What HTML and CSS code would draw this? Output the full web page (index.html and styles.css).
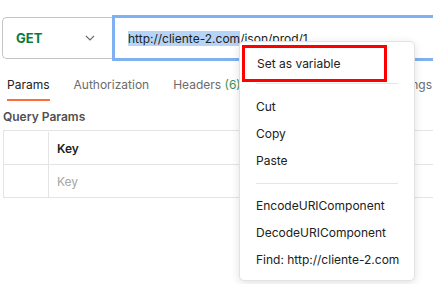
FILE: index.html
```html
<!DOCTYPE html>
<html lang="en">
  <head>
    <meta charset="UTF-8" />
    <title>Request</title>
    <link rel="stylesheet" href="styles.css">
  </head>
  <body>
    <div class="request_bar">
      <div class="method">
        <span class="get">GET</span>
        <svg class="chevron" width="10" height="6" viewBox="0 0 10 6"><path d="M1 1l4 4 4-4" fill="none" stroke="#6b6b6b" stroke-width="1.1"/></svg>
      </div>
      <div class="url"><span class="sel">http://cliente-2.com</span>/json/prod/1</div>
    </div>

    <div class="tabs">
      <div class="tab active">Params</div>
      <div class="tab">Authorization</div>
      <div class="tab">Headers <span class="count">(6)</span></div>
      <div class="tab">Body</div>
      <div class="tab last">Settings</div>
    </div>

    <div class="section_title">Query Params</div>
    <div class="params">
      <div class="row">
        <div class="check"></div>
        <div class="cell head">Key</div>
      </div>
      <div class="row">
        <div class="check"></div>
        <div class="cell placeholder">Key</div>
      </div>
    </div>

    <div class="menu">
      <div class="item highlighted">Set as variable</div>
      <div class="divider"></div>
      <div class="item">Cut</div>
      <div class="item">Copy</div>
      <div class="item">Paste</div>
      <div class="divider"></div>
      <div class="item">EncodeURIComponent</div>
      <div class="item">DecodeURIComponent</div>
      <div class="item">Find: http://cliente-2.com</div>
    </div>
  </body>
</html>
```

FILE: styles.css
```css
body {
  margin: 0;
  background-color: #ffffff;
  font-family: "Inter", "Liberation Sans", sans-serif;
  color: #212121;
  overflow: hidden;
}

.request_bar {
  display: flex;
  margin-top: 15px;
  padding-left: 2px;
  height: 46px;
}

.method {
  display: flex;
  align-items: center;
  justify-content: space-between;
  box-sizing: border-box;
  width: 110px;
  height: 42px;
  margin-top: 2px;
  padding: 0 17px 0 13px;
  border: 1px solid #c4c4c4;
  border-right: none;
  border-radius: 5px 0 0 5px;
}

.get {
  color: #0b7a3a;
  font-weight: 700;
  font-size: 13px;
}

.url {
  flex: 1;
  display: flex;
  align-items: center;
  padding-left: 13px;
  border: 3px solid #7eb0f2;
  border-right: none;
  font-size: 12px;
  color: #212121;
  white-space: nowrap;
}

.sel {
  background-color: #b6d4f7;
}

.tabs {
  display: flex;
  gap: 24px;
  padding: 0 1px 0 7px;
  margin-top: 16px;
  font-size: 12px;
  color: #6b6b6b;
  white-space: nowrap;
  overflow: hidden;
}

.tab {
  padding-bottom: 7px;
  border-bottom: 2px solid transparent;
}

.tab.active {
  color: #212121;
  border-bottom-color: #ff6c37;
}

.tab.last {
  margin-left: auto;
}

.count {
  color: #3f8f5a;
}

.section_title {
  padding-left: 3px;
  margin-top: 8px;
  font-size: 12px;
  font-weight: 600;
  color: #505050;
}

.params {
  margin: 6px 0 0 3px;
  border: 1px solid #e4e4e4;
  border-right: none;
}

.row {
  display: flex;
  height: 32px;
}

.row:first-child {
  padding-top: 1px;
}

.row + .row {
  border-top: 1px solid #e4e4e4;
}

.check {
  width: 44px;
  border-right: 1px solid #e4e4e4;
}

.cell {
  display: flex;
  align-items: center;
  padding-left: 8px;
  font-size: 12px;
}

.head {
  font-weight: 600;
  color: #212121;
}

.placeholder {
  color: #a6a6a6;
}

.menu {
  position: absolute;
  left: 239px;
  top: 41px;
  width: 176px;
  height: 240px;
  box-sizing: border-box;
  padding: 3px 2px;
  background-color: #ffffff;
  border: 1px solid #e2e2e2;
  border-radius: 5px;
  box-shadow: 0 2px 8px rgba(0, 0, 0, 0.12);
  font-size: 12px;
  color: #212121;
}

.item {
  height: 27px;
  display: flex;
  align-items: center;
  padding-left: 14px;
}

.item.highlighted {
  box-sizing: border-box;
  height: 37px;
  width: 145px;
  padding-left: 12px;
  border: 3px solid #ff0000;
}

.divider {
  height: 1px;
  margin: 9px 14px 8px 14px;
  background-color: #e6e6e6;
}

.highlighted + .divider {
  margin-top: 1px;
  margin-bottom: 9px;
}
```
